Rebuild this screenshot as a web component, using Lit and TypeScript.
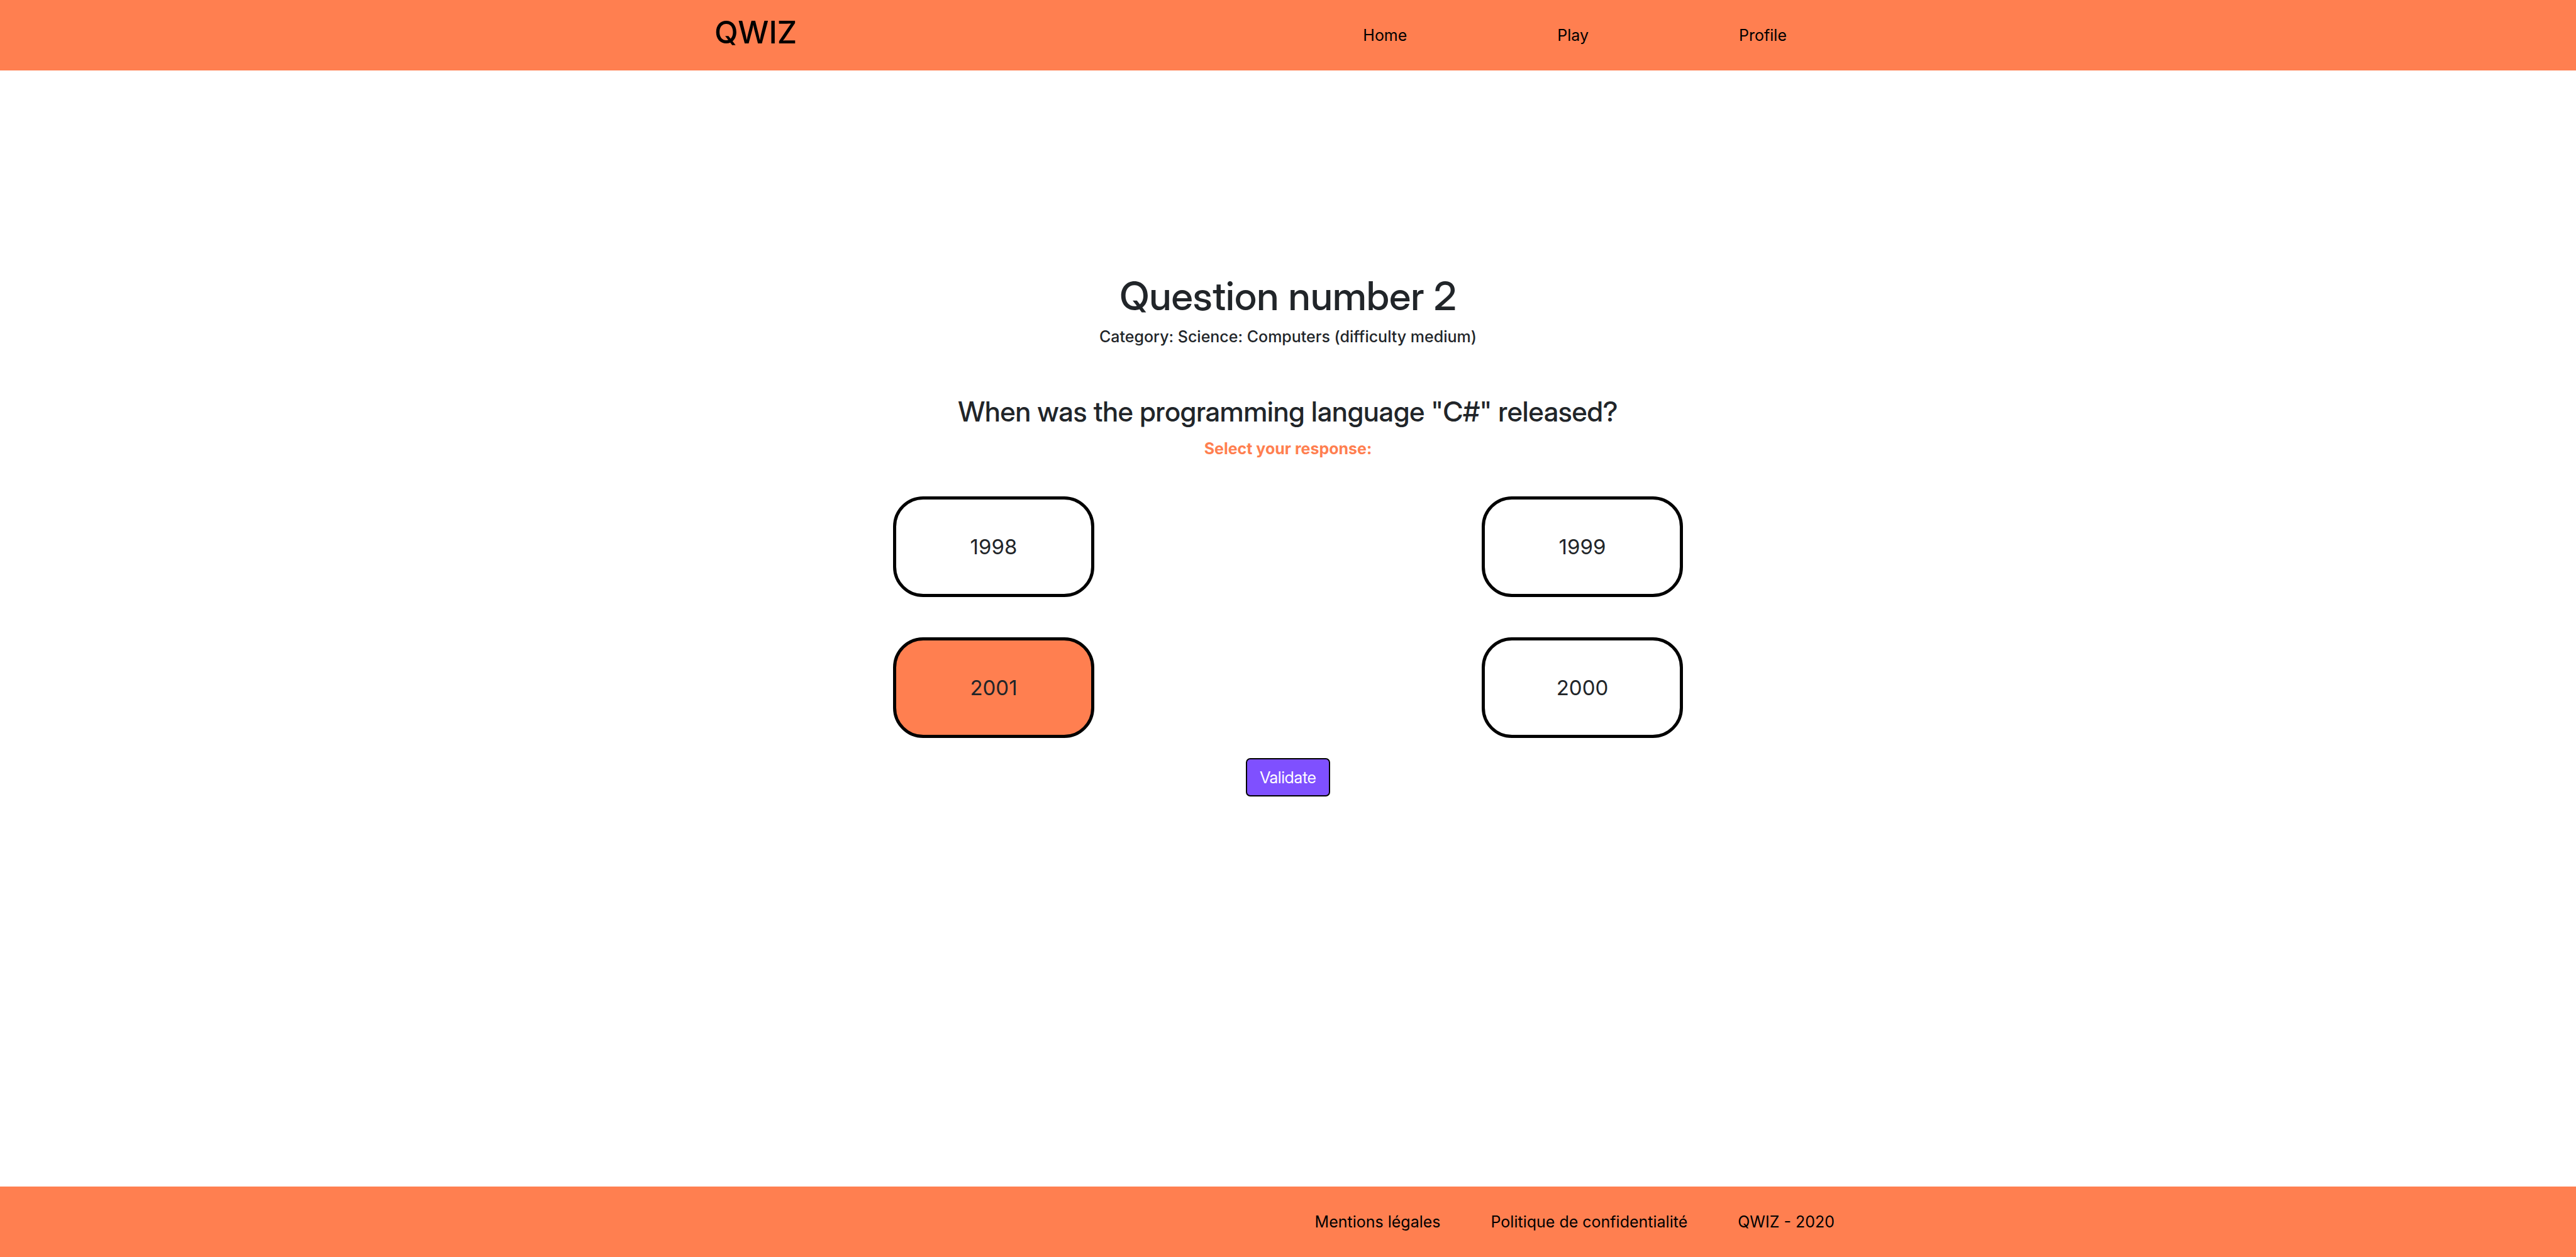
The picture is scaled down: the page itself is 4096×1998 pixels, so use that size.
import { LitElement, html, css } from "lit";
import { customElement, state } from "lit/decorators.js";
import { classMap } from "lit/directives/class-map.js";

@customElement("app-root")
export class AppRoot extends LitElement {
  static styles = css`
    :host {
      display: flex;
      flex-direction: column;
      min-height: 100vh;
      background: #fff;
      color: #212529;
      font-family: Inter, "Liberation Sans", sans-serif;
      font-size: 25px;
      line-height: 32px;
    }
    .bar {
      background: #ff7f50;
      color: #000;
    }
    .bar a {
      color: inherit;
      text-decoration: none;
    }
    .container {
      display: flex;
      align-items: center;
      justify-content: space-between;
      box-sizing: border-box;
      width: 100%;
      max-width: 1824px;
      min-height: 112px;
      margin: 0 auto;
    }
    .logo {
      font-size: 49px;
      font-weight: 500;
      line-height: 60px;
      padding-bottom: 8px;
    }
    .links {
      display: flex;
      margin: 0 0 0 auto;
      padding: 0;
      list-style: none;
    }
    .primary {
      gap: 239px;
      padding-right: 119px;
    }
    .legal {
      gap: 80px;
      padding-right: 43px;
    }
    main {
      flex: 1;
      display: flex;
      flex-direction: column;
      align-items: center;
      padding: 320px 24px 0;
      text-align: center;
    }
    h1,
    h2,
    p {
      margin: 0;
    }
    .title,
    .question,
    .validate {
      font-family: "Inter Display", Inter, "Liberation Sans", sans-serif;
    }
    .title {
      font-size: 63px;
      font-weight: 500;
      line-height: 76px;
    }
    .category {
      margin-top: 11px;
      font-weight: 500;
    }
    .question {
      margin-top: 76px;
      font-size: 44px;
      font-weight: 500;
      line-height: 54px;
    }
    .prompt {
      margin-top: 16px;
      color: #ff7f50;
      font-weight: 700;
    }
    .answers {
      display: grid;
      grid-template-columns: repeat(2, 320px);
      justify-content: space-between;
      gap: 64px;
      width: 100%;
      max-width: 1256px;
      margin-top: 60px;
    }
    button {
      cursor: pointer;
    }
    .answer {
      height: 160px;
      padding: 0;
      border: 5px solid #000;
      border-radius: 48px;
      background: #fff;
      color: inherit;
      font-family: inherit;
      font-size: 33px;
      line-height: 40px;
    }
    .selected {
      background: #ff7f50;
    }
    .validate {
      margin-top: 32px;
      padding: 13px 20px;
      border: 2px solid #000;
      border-radius: 7px;
      background: #7f50ff;
      color: #fff;
      font-size: 26px;
      line-height: 31px;
    }
  `;

  @state() private choice = "2001";

  private answers = ["1998", "1999", "2001", "2000"];

  render() {
    return html`
      <header class="bar">
        <div class="container">
          <a class="logo" href="#home">QWIZ</a>
          <nav>
            <ul class="links primary">
              <li><a href="#home">Home</a></li>
              <li><a href="#play">Play</a></li>
              <li><a href="#profile">Profile</a></li>
            </ul>
          </nav>
        </div>
      </header>
      <main>
        <h1 class="title">Question number 2</h1>
        <p class="category">Category: Science: Computers (difficulty medium)</p>
        <h2 class="question">When was the programming language "C#" released?</h2>
        <p class="prompt">Select your response:</p>
        <div class="answers">
          ${this.answers.map(
            (answer) => html`<button
              type="button"
              class=${classMap({ answer: true, selected: answer === this.choice })}
              aria-pressed=${answer === this.choice ? "true" : "false"}
              @click=${() => (this.choice = answer)}
            >${answer}</button>`
          )}
        </div>
        <button type="button" class="validate">Validate</button>
      </main>
      <footer class="bar">
        <div class="container">
          <ul class="links legal">
            <li><a href="#mentions">Mentions légales</a></li>
            <li><a href="#confidentialite">Politique de confidentialité</a></li>
            <li>QWIZ - 2020</li>
          </ul>
        </div>
      </footer>
    `;
  }
}
